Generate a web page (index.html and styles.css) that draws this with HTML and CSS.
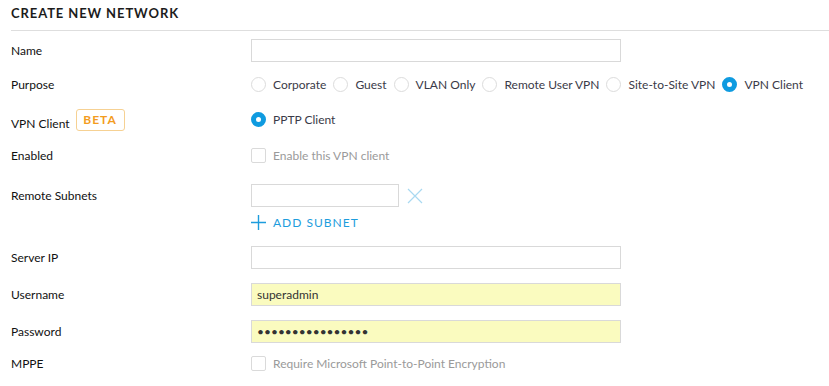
FILE: index.html
```html
<!DOCTYPE html>
<html lang="en">
<head>
	<meta charset="UTF-8">
	<title>Create New Network</title>
	<link rel="stylesheet" href="styles.css">
</head>
<body>
	<div class="network-form">
		<h2 class="form-title">CREATE NEW NETWORK</h2>

		<div class="row row-first">
			<label class="row-label">Name</label>
			<input class="text-field" type="text" value="">
		</div>

		<div class="row row-purpose">
			<label class="row-label">Purpose</label>
			<div class="radio-group">
				<span class="option"><span class="radio"></span>Corporate</span>
				<span class="option"><span class="radio"></span>Guest</span>
				<span class="option"><span class="radio"></span>VLAN Only</span>
				<span class="option"><span class="radio"></span>Remote User VPN</span>
				<span class="option"><span class="radio"></span>Site-to-Site VPN</span>
				<span class="option"><span class="radio checked"></span>VPN Client</span>
			</div>
		</div>

		<div class="row">
			<div class="row-label with-badge">
				<span class="badge-label">VPN Client</span>
				<span class="badge">BETA</span>
			</div>
			<div class="radio-group">
				<span class="option"><span class="radio checked"></span>PPTP Client</span>
			</div>
		</div>

		<div class="row row-enabled">
			<label class="row-label">Enabled</label>
			<span class="check-option"><span class="checkbox"></span>Enable this VPN client</span>
		</div>

		<div class="row row-subnets">
			<label class="row-label">Remote Subnets</label>
			<div class="subnets">
				<div class="subnet-line">
					<input class="text-field short" type="text" value="">
					<svg class="remove-icon" width="16" height="16" viewBox="0 0 16 16">
						<path d="M1 1 L15 15 M15 1 L1 15" stroke="#a9d9f1" stroke-width="1.2" fill="none"/>
					</svg>
				</div>
				<a class="add-link" href="#">
					<svg width="15" height="15" viewBox="0 0 15 15">
						<path d="M7.5 0 V15 M0 7.5 H15" stroke="#1d9ddd" stroke-width="1.4" fill="none"/>
					</svg>
					ADD SUBNET
				</a>
			</div>
		</div>

		<div class="row row-server">
			<label class="row-label">Server IP</label>
			<input class="text-field" type="text" value="">
		</div>

		<div class="row row-cred">
			<label class="row-label">Username</label>
			<input class="text-field filled" type="text" value="superadmin">
		</div>

		<div class="row row-cred">
			<label class="row-label">Password</label>
			<input class="text-field filled" type="password" value="supersecretpass1">
		</div>

		<div class="row row-last">
			<label class="row-label">MPPE</label>
			<span class="check-option"><span class="checkbox"></span>Require Microsoft Point-to-Point Encryption</span>
		</div>
	</div>
</body>
</html>
```

FILE: styles.css
```css
*{
	padding: 0;
	margin: 0;
	box-sizing: border-box;
}
body{
	background: #fff;
	font-family: Lato, "Open Sans", sans-serif;
	font-size: 12px;
	color: #111;
}
.network-form{
	padding-left: 11px;
}
.form-title{
	height: 31px;
	padding-top: 6px;
	font-size: 13px;
	font-weight: 700;
	letter-spacing: 0.9px;
	line-height: 14px;
	color: #1c1c1c;
	border-bottom: 1px solid #dedede;
}
.row{
	display: grid;
	grid-template-columns: 240px 1fr;
	align-items: center;
	min-height: 23px;
	margin-top: 12px;
}
.row-first{
	margin-top: 8px;
}
.row-purpose{
	margin-top: 11px;
}
.row-enabled{
	margin-top: 13px;
}
.row-subnets{
	margin-top: 17px;
	align-items: start;
}
.row-subnets .row-label{
	line-height: 23px;
}
.row-server{
	margin-top: 16px;
}
.row-cred{
	margin-top: 14px;
}
.row-last{
	margin-top: 9px;
}
.row-label{
	color: #111;
	line-height: 15px;
}
.with-badge{
	display: flex;
	align-items: center;
}
.badge-label{
	padding-top: 8px;
	line-height: 15px;
}
.badge{
	margin-left: 6px;
	width: 49px;
	height: 22px;
	border: 1px solid #f6d193;
	border-radius: 3px;
	color: #f39c1f;
	font-weight: 700;
	letter-spacing: 1px;
	text-align: center;
	line-height: 20px;
}
.text-field{
	width: 370px;
	height: 23px;
	border: 1px solid #d9d9d9;
	padding: 0 5px;
	font-family: Lato, "Open Sans", sans-serif;
	font-size: 12px;
	color: #333;
	background: #fff;
	outline: none;
}
.text-field.short{
	width: 148px;
}
.text-field.filled{
	background: #fafbbf;
}
.radio-group{
	display: flex;
	align-items: center;
}
.option{
	display: flex;
	align-items: center;
	margin-right: 7px;
	color: #3a3a48;
	white-space: nowrap;
}
.radio{
	display: inline-block;
	width: 15px;
	height: 15px;
	border: 1px solid #dcdcdc;
	border-radius: 50%;
	margin-right: 7px;
	background: #fff;
}
.radio.checked{
	border: 5px solid #0f9be0;
	background: #fff;
}
.check-option{
	display: flex;
	align-items: center;
	color: #9a9a9a;
}
.checkbox{
	display: inline-block;
	width: 15px;
	height: 15px;
	border: 1px solid #dadada;
	border-radius: 2px;
	margin-right: 7px;
}
.subnet-line{
	display: flex;
	align-items: center;
}
.remove-icon{
	margin-left: 8px;
}
.add-link{
	display: flex;
	align-items: center;
	margin-top: 8px;
	color: #1d9ddd;
	text-decoration: none;
	letter-spacing: 1px;
	line-height: 15px;
}
.add-link svg{
	margin-right: 7px;
}
```
